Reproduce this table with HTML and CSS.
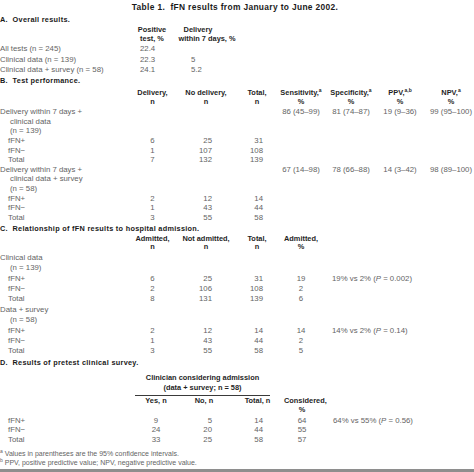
FILE: index.html
```html
<!DOCTYPE html>
<html>
<head>
<meta charset="utf-8">
<link rel="stylesheet" href="styles.css">
</head>
<body>
<div class="page">
  <div class="title">Table 1.&nbsp; fFN results from January to June 2002.</div>

  <section class="sec sec-a">
    <div class="heading">A.&nbsp; Overall results.</div>
    <div class="row hdr">
      <div></div>
      <div class="c">Positive<br>test, %</div>
      <div class="c"><span class="dl">Delivery</span><br>within 7 days, %</div>
    </div>
    <div class="rows">
      <div class="row"><div>All tests (n = 245)</div><div class="v1">22.4</div><div class="v2"></div></div>
      <div class="row"><div>Clinical data (n = 139)</div><div class="v1">22.3</div><div class="v2">5</div></div>
      <div class="row"><div>Clinical data + survey (n = 58)</div><div class="v1">24.1</div><div class="v2">5.2</div></div>
    </div>
  </section>

  <section class="sec sec-b">
    <div class="heading">B.&nbsp; Test performance.</div>
    <div class="row hdr">
      <div></div>
      <div class="c">Delivery,<br>n</div>
      <div class="c">No delivery,<br>n</div>
      <div class="c">Total,<br>n</div>
      <div class="c">Sensitivity,<sup>a</sup><br>%</div>
      <div class="c">Specificity,<sup>a</sup><br>%</div>
      <div class="c">PPV,<sup>a,b</sup><br>%</div>
      <div class="c">NPV,<sup>a</sup><br>%</div>
    </div>
    <div class="rows">
      <div class="row"><div>Delivery within 7 days +</div><div></div><div></div><div></div><div class="c">86 (45–99)</div><div class="c">81 (74–87)</div><div class="c">19 (9–36)</div><div class="c">99 (95–100)</div></div>
      <div class="row"><div class="cont">clinical data</div></div>
      <div class="row"><div class="cont">(n = 139)</div></div>
      <div class="row"><div class="sub">fFN+</div><div class="c">6</div><div class="r n2">25</div><div class="r n3">31</div></div>
      <div class="row"><div class="sub">fFN−</div><div class="c">1</div><div class="r n2">107</div><div class="r n3">108</div></div>
      <div class="row"><div class="sub">Total</div><div class="c">7</div><div class="r n2">132</div><div class="r n3">139</div></div>
      <div class="row"><div>Delivery within 7 days +</div><div></div><div></div><div></div><div class="c">67 (14–98)</div><div class="c">78 (66–88)</div><div class="c">14 (3–42)</div><div class="c">98 (89–100)</div></div>
      <div class="row"><div class="cont">clinical data + survey</div></div>
      <div class="row"><div class="cont">(n = 58)</div></div>
      <div class="row"><div class="sub">fFN+</div><div class="c">2</div><div class="r n2">12</div><div class="r n3">14</div></div>
      <div class="row"><div class="sub">fFN−</div><div class="c">1</div><div class="r n2">43</div><div class="r n3">44</div></div>
      <div class="row"><div class="sub">Total</div><div class="c">3</div><div class="r n2">55</div><div class="r n3">58</div></div>
    </div>
  </section>

  <section class="sec sec-c">
    <div class="heading">C.&nbsp; Relationship of fFN results to hospital admission.</div>
    <div class="row hdr">
      <div></div>
      <div class="c">Admitted,<br>n</div>
      <div class="c">Not admitted,<br>n</div>
      <div class="c">Total,<br>n</div>
      <div class="c">Admitted,<br>%</div>
      <div></div>
    </div>
    <div class="rows">
      <div class="row"><div>Clinical data</div></div>
      <div class="row"><div class="cont">(n = 139)</div></div>
      <div class="row"><div class="sub">fFN+</div><div class="c">6</div><div class="r n2">25</div><div class="r n3">31</div><div class="c">19</div><div class="cmp">19% vs 2% (<i>P</i> = 0.002)</div></div>
      <div class="row"><div class="sub">fFN−</div><div class="c">2</div><div class="r n2">106</div><div class="r n3">108</div><div class="c">2</div><div></div></div>
      <div class="row"><div class="sub">Total</div><div class="c">8</div><div class="r n2">131</div><div class="r n3">139</div><div class="c">6</div><div></div></div>
      <div class="row"><div>Data + survey</div></div>
      <div class="row"><div class="cont">(n = 58)</div></div>
      <div class="row"><div class="sub">fFN+</div><div class="c">2</div><div class="r n2">12</div><div class="r n3">14</div><div class="c">14</div><div class="cmp">14% vs 2% (<i>P</i> = 0.14)</div></div>
      <div class="row"><div class="sub">fFN−</div><div class="c">1</div><div class="r n2">43</div><div class="r n3">44</div><div class="c">2</div><div></div></div>
      <div class="row"><div class="sub">Total</div><div class="c">3</div><div class="r n2">55</div><div class="r n3">58</div><div class="c">5</div><div></div></div>
    </div>
  </section>

  <section class="sec sec-d">
    <div class="heading">D.&nbsp; Results of pretest clinical survey.</div>
    <div class="row span-row">
      <div></div>
      <div class="span">Clinician considering admission<br>(data + survey; n = 58)</div>
    </div>
    <div class="row hdr">
      <div></div>
      <div class="c">Yes, n</div>
      <div class="c">No, n</div>
      <div class="c">Total, n</div>
      <div class="c">Considered,<br>%</div>
      <div></div>
    </div>
    <div class="rows">
      <div class="row"><div class="sub">fFN+</div><div class="c">9</div><div class="r n2">5</div><div class="r n3">14</div><div class="c">64</div><div class="cmp">64% vs 55% (<i>P</i> = 0.56)</div></div>
      <div class="row"><div class="sub">fFN−</div><div class="c">24</div><div class="r n2">20</div><div class="r n3">44</div><div class="c">55</div><div></div></div>
      <div class="row"><div class="sub">Total</div><div class="c">33</div><div class="r n2">25</div><div class="r n3">58</div><div class="c">57</div><div></div></div>
    </div>
  </section>

  <div class="notes">
    <div><sup>a</sup> Values in parentheses are the 95% confidence intervals.</div>
    <div><sup>b</sup> PPV, positive predictive value; NPV, negative predictive value.</div>
  </div>
  <div class="bar"></div>
</div>
</body>
</html>
```

FILE: styles.css
```css
html, body {
  margin: 0;
  padding: 0;
  background: #ffffff;
}
body {
  width: 474px;
  height: 472px;
  overflow: hidden;
  font-family: "Liberation Sans", Arial, sans-serif;
  font-size: 7.8px;
  color: #646464;
}
.page {
  height: 472px;
  display: flex;
  flex-direction: column;
}
.title {
  padding-top: 2px;
  line-height: 10px;
  font-weight: bold;
  font-size: 8.4px;
  color: #1a1a1a;
  text-align: center;
  width: 470px;
  letter-spacing: 0.35px;
}
.heading {
  font-weight: bold;
  color: #1a1a1a;
  font-size: 7.3px;
  line-height: 10px;
  letter-spacing: 0.3px;
}
.row {
  display: grid;
  white-space: nowrap;
}
.hdr {
  font-weight: bold;
  color: #1f1f1f;
  font-size: 7.4px;
  line-height: 8.5px;
}
.c { text-align: center; }
.r { text-align: right; }
.cont { padding-left: 10px; }
.sub { padding-left: 8px; }
sup {
  font-size: 5px;
  line-height: 0;
  vertical-align: 3px;
}

/* Section A */
.sec-a .heading { margin-top: 3px; }
.sec-a .hdr { margin-top: 1px; }
.sec-a .row { grid-template-columns: 128px 48px 62px; }
.sec-a .rows { margin-top: 1px; line-height: 10.5px; }
.sec-a .v1 { padding-left: 12px; }
.sec-a .v2 { padding-left: 15px; }
.sec-a .dl { padding-right: 18px; }

/* Section B */
.sec-b .heading { margin-top: 0.5px; }
.sec-b .hdr { margin-top: 3px; }
.sec-b .row { grid-template-columns: 135px 35px 72px 30px 58px 42px 56px 46px; }
.sec-b .rows { margin-top: 1.2px; line-height: 9.6px; }
.sec-b .n2 { padding-right: 30px; }
.sec-b .n3 { padding-right: 9px; }

/* Section C */
.sec-c .heading { margin-top: 1.6px; }
.sec-c .hdr { margin-top: 1px; }
.sec-c .row { grid-template-columns: 135px 35px 72px 30px 58px 144px; }
.sec-c .rows { margin-top: 0.8px; line-height: 10.4px; }
.sec-c .n2 { padding-right: 30px; }
.sec-c .n3 { padding-right: 9px; }
.cmp { padding-left: 2px; }

/* Section D */
.sec-d .heading { margin-top: 0.8px; }
.sec-d .row { grid-template-columns: 135px 42px 54px 53px 36px 154px; }
.span-row {
  margin-top: 5px;
  font-weight: bold;
  color: #1f1f1f;
  font-size: 7.4px;
  line-height: 10px;
}
.span {
  grid-column: 2 / 5;
  width: 135px;
  text-align: center;
  border-bottom: 1px solid #3a3a3a;
  padding-bottom: 2px;
}
.sec-d .hdr { margin-top: 1.5px; }
.sec-d .rows { margin-top: 1.5px; line-height: 9.6px; }
.sec-d .n2 { padding-right: 19px; }
.sec-d .n3 { padding-right: 21px; }
.sec-d .cmp { padding-left: 13px; }

.notes {
  margin-top: 4.5px;
  font-size: 7px;
  line-height: 9px;
}
.bar {
  margin-top: auto;
  height: 3px;
  background: #8e8e8e;
}
```
